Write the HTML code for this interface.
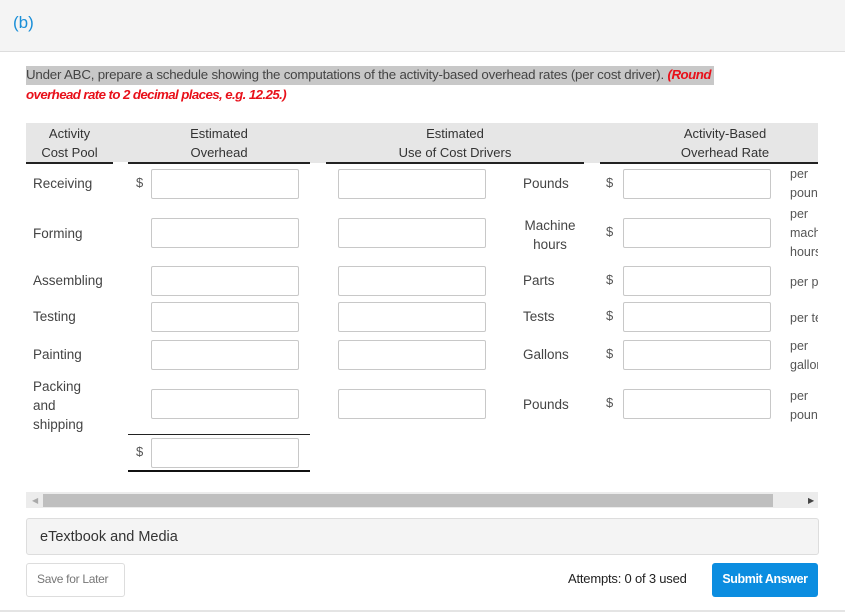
<!DOCTYPE html>
<html><head><style>
body{margin:0;width:845px;height:616px;position:relative;background:#fff;font-family:"Liberation Sans",sans-serif;overflow:hidden;color:#333}
.a{position:absolute}
.in{position:absolute;width:146px;height:28px;border:1px solid #c8c8c8;background:#fff;border-radius:2px}
.t{position:absolute;font-size:13.5px;color:#444}
.h{position:absolute;font-size:13px;text-align:center;line-height:19px;color:#333}
.ul{position:absolute;height:2px;background:#222;top:162px}
.d{position:absolute;font-size:13px;color:#555}
.p{position:absolute;font-size:12.5px;color:#555;line-height:19px;left:790px;width:28px;overflow:hidden;white-space:nowrap}
</style></head><body>
<div class="a" style="left:0;top:0;width:845px;height:51px;background:#f4f4f4;border-bottom:1px solid #ddd"></div>
<div class="a" style="left:13px;top:13px;font-size:17px;color:#1a8fd8">(b)</div>
<div class="a" style="left:26px;top:66px;width:688px;height:19px;background:#c8c8c8"></div>
<div class="a" style="left:26px;top:67px;font-size:13.3px;color:#444;white-space:nowrap;letter-spacing:-0.2px">Under ABC, prepare a schedule showing the computations of the activity-based overhead rates (per cost driver). <span style="color:#e8101a;font-weight:bold;font-style:italic;letter-spacing:-0.5px">(Round</span></div>
<div class="a" style="left:26px;top:87px;font-size:13.3px;color:#e8101a;font-weight:bold;font-style:italic;letter-spacing:-0.6px">overhead rate to 2 decimal places, e.g. 12.25.)</div>
<div class="a" style="left:26px;top:123px;width:792px;height:40px;background:#e6e6e6"></div>
<div class="h" style="left:26px;top:124px;width:87px">Activity<br>Cost Pool</div>
<div class="h" style="left:150px;top:124px;width:138px">Estimated<br>Overhead</div>
<div class="h" style="left:355px;top:124px;width:200px">Estimated<br>Use of Cost Drivers</div>
<div class="h" style="left:640px;top:124px;width:170px">Activity-Based<br>Overhead Rate</div>
<div class="a" style="left:113px;top:162px;width:15px;height:3px;background:#fff"></div>
<div class="ul" style="left:26px;width:87px"></div>
<div class="ul" style="left:128px;width:182px"></div>
<div class="ul" style="left:326px;width:258px"></div>
<div class="ul" style="left:600px;width:218px"></div>

<div class="t" style="left:33px;top:176px">Receiving</div>
<div class="d" style="left:136px;top:175px">$</div><div class="in" style="left:151px;top:169px"></div>
<div class="in" style="left:338px;top:169px"></div><div class="t" style="left:523px;top:176px">Pounds</div>
<div class="d" style="left:606px;top:175px">$</div><div class="in" style="left:623px;top:169px"></div>
<div class="p" style="top:165px">per<br>pounds</div>

<div class="t" style="left:33px;top:226px">Forming</div>
<div class="in" style="left:151px;top:218px"></div><div class="in" style="left:338px;top:218px"></div>
<div class="t" style="left:520px;top:216px;line-height:19px;text-align:center;width:60px">Machine<br>hours</div>
<div class="d" style="left:606px;top:224px">$</div><div class="in" style="left:623px;top:218px"></div>
<div class="p" style="top:205px">per<br>machine<br>hours</div>

<div class="t" style="left:33px;top:273px">Assembling</div>
<div class="in" style="left:151px;top:266px"></div><div class="in" style="left:338px;top:266px"></div>
<div class="t" style="left:523px;top:273px">Parts</div>
<div class="d" style="left:606px;top:272px">$</div><div class="in" style="left:623px;top:266px"></div>
<div class="p" style="top:273px">per part</div>

<div class="t" style="left:33px;top:309px">Testing</div>
<div class="in" style="left:151px;top:302px"></div><div class="in" style="left:338px;top:302px"></div>
<div class="t" style="left:523px;top:309px">Tests</div>
<div class="d" style="left:606px;top:308px">$</div><div class="in" style="left:623px;top:302px"></div>
<div class="p" style="top:309px">per test</div>

<div class="t" style="left:33px;top:347px">Painting</div>
<div class="in" style="left:151px;top:340px"></div><div class="in" style="left:338px;top:340px"></div>
<div class="t" style="left:523px;top:347px">Gallons</div>
<div class="d" style="left:606px;top:346px">$</div><div class="in" style="left:623px;top:340px"></div>
<div class="p" style="top:337px">per<br>gallon</div>

<div class="t" style="left:33px;top:377px;line-height:19px">Packing<br>and<br>shipping</div>
<div class="in" style="left:151px;top:389px"></div><div class="in" style="left:338px;top:389px"></div>
<div class="t" style="left:523px;top:397px">Pounds</div>
<div class="d" style="left:606px;top:395px">$</div><div class="in" style="left:623px;top:389px"></div>
<div class="p" style="top:387px">per<br>pounds</div>

<div class="a" style="left:128px;top:434px;width:182px;height:1px;background:#222"></div>
<div class="d" style="left:136px;top:444px">$</div><div class="in" style="left:151px;top:438px"></div>
<div class="a" style="left:128px;top:470px;width:182px;height:2px;background:#111"></div>

<div class="a" style="left:26px;top:492px;width:792px;height:16px;background:#ececec"></div>
<div class="a" style="left:43px;top:494px;width:730px;height:13px;background:#bfbfbf"></div>
<div class="a" style="left:32px;top:496px;font-size:8px;color:#aaa">◀</div>
<div class="a" style="left:808px;top:496px;font-size:8px;color:#444">▶</div>

<div class="a" style="left:26px;top:518px;width:791px;height:35px;background:#f4f4f4;border:1px solid #ddd;border-radius:3px"></div>
<div class="a" style="left:40px;top:529px;font-size:14.5px;color:#333">eTextbook and Media</div>

<div class="a" style="left:26px;top:563px;width:97px;height:32px;border:1px solid #ddd;border-radius:3px;background:#fff"></div>
<div class="a" style="left:37px;top:572px;font-size:12px;color:#777;letter-spacing:-0.3px">Save for Later</div>
<div class="a" style="left:568px;top:571px;font-size:13px;color:#222;letter-spacing:-0.2px">Attempts: 0 of 3 used</div>
<div class="a" style="left:712px;top:563px;width:106px;height:34px;background:#0b8de0;border-radius:3px"></div>
<div class="a" style="left:712px;top:572px;width:106px;text-align:center;font-size:12.5px;color:#fff;font-weight:bold;letter-spacing:-0.4px">Submit Answer</div>
<div class="a" style="left:0;top:610px;width:845px;height:2px;background:#e4e4e4"></div>
</body></html>
